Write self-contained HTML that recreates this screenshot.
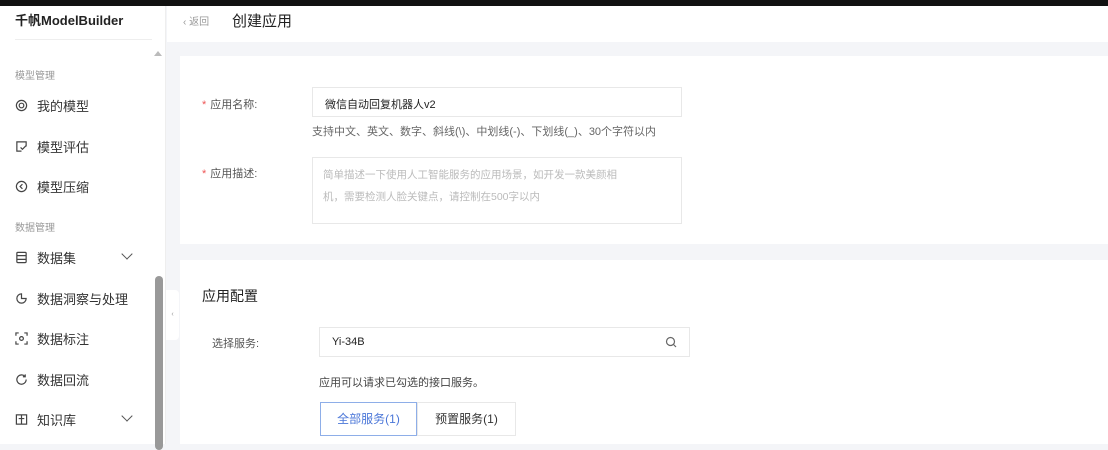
<!DOCTYPE html>
<html><head><meta charset="utf-8"><style>
*{margin:0;padding:0;box-sizing:border-box}
body{width:1108px;height:444px;overflow:hidden;background:#f4f5f8;font-family:"Liberation Sans","Noto Sans CJK SC",sans-serif;position:relative;color:#333}
.top{position:absolute;left:0;top:0;width:1108px;height:6px;background:#111}
.side{position:absolute;left:0;top:6px;width:166px;height:438px;background:#fff;border-right:1px solid #eee}
.logo{position:absolute;left:15px;top:4px;font-size:13px;font-weight:bold;color:#222}
.sep{position:absolute;left:15px;top:33px;width:137px;height:1px;background:#eee}
.grp{position:absolute;left:15px;font-size:10px;color:#999}
.item{position:absolute;left:15px;font-size:13px;color:#333;display:flex;align-items:center}
.item svg{width:13px;height:13px;margin-right:9px}
.chev{position:absolute;left:123px;width:8px;height:8px;border-right:1.3px solid #555;border-bottom:1.3px solid #555;transform:rotate(45deg)}
.sb{position:absolute;left:155px;top:270px;width:8px;height:174px;background:#999;border-radius:4px}
.sbt{position:absolute;left:154px;top:45px;width:0;height:0;border-left:4px solid transparent;border-right:4px solid transparent;border-bottom:5px solid #bbb}
.hdr{position:absolute;left:167px;top:6px;width:941px;height:36px;background:#fff}
.back{position:absolute;left:16px;top:7px;font-size:10px;color:#999}
.title{position:absolute;left:65px;top:4px;font-size:15px;color:#222}
.card{position:absolute;left:180px;width:928px;background:#fff}
.lbl{position:absolute;font-size:11px;color:#555}
.lbl b{color:#e55;font-weight:normal;margin-right:4px}
.inp{position:absolute;border:1px solid #e8e8e8;background:#fff;font-size:11px}
.tab{position:absolute;font-size:12px;height:34px;line-height:32px;text-align:center;border:1px solid #e8e8e8}
.coll{position:absolute;left:166px;top:290px;width:13px;height:50px;background:#fff;border-radius:0 4px 4px 0;font-size:7px;color:#999;line-height:50px;text-align:center}
</style></head><body>
<div class="top"></div>
<div class="side">
<div class="logo">千帆ModelBuilder</div>
<div class="sep"></div>
<div class="sbt"></div>
<div class="grp" style="top:61px">模型管理</div>
<div class="item" style="top:90px"><svg viewBox="0 0 14 14" fill="none" stroke="#444" stroke-width="1.3"><circle cx="7" cy="7" r="5.5"/><circle cx="7" cy="7" r="2.5"/></svg>我的模型</div>
<div class="item" style="top:131px"><svg viewBox="0 0 14 14" fill="none" stroke="#444" stroke-width="1.3"><path d="M12 7V2H2v10h5M6 8l2 2 4-4"/></svg>模型评估</div>
<div class="item" style="top:171px"><svg viewBox="0 0 14 14" fill="none" stroke="#444" stroke-width="1.3"><circle cx="7" cy="7" r="5.5"/><path d="M8 4.5L5.5 7 8 9.5"/></svg>模型压缩</div>
<div class="grp" style="top:213px">数据管理</div>
<div class="item" style="top:242px"><svg viewBox="0 0 14 14" fill="none" stroke="#444" stroke-width="1.3"><rect x="2" y="1.5" width="10" height="11" rx="1"/><path d="M2 5h10M2 9h10"/></svg>数据集</div><div class="chev" style="top:244px"></div>
<div class="item" style="top:283px"><svg viewBox="0 0 14 14" fill="none" stroke="#444" stroke-width="1.3"><path d="M7 2a5 5 0 1 0 5 5H7z"/></svg>数据洞察与处理</div>
<div class="item" style="top:323px"><svg viewBox="0 0 14 14" fill="none" stroke="#444" stroke-width="1.3"><path d="M1 4V1h3M10 1h3v3M13 10v3h-3M4 13H1v-3"/><circle cx="7" cy="7" r="2"/></svg>数据标注</div>
<div class="item" style="top:364px"><svg viewBox="0 0 14 14" fill="none" stroke="#444" stroke-width="1.3"><path d="M12 7a5 5 0 1 1-1.5-3.5M11 1.5v2.5H8.5"/></svg>数据回流</div>
<div class="item" style="top:404px"><svg viewBox="0 0 14 14" fill="none" stroke="#444" stroke-width="1.3"><rect x="1.5" y="2" width="11" height="10"/><path d="M7 2v10M4 6h6"/></svg>知识库</div><div class="chev" style="top:406px"></div>
<div class="sb"></div>
</div>
<div class="coll">‹</div>
<div class="hdr"><div class="back">‹ 返回</div><div class="title">创建应用</div></div>
<div class="card" style="top:56px;height:188px">
<div class="lbl" style="left:22px;top:40px"><b>*</b>应用名称:</div>
<div class="inp" style="left:132px;top:31px;width:370px;height:30px;padding:8px 12px;color:#222">微信自动回复机器人v2</div>
<div class="lbl" style="left:132px;top:67px;color:#666">支持中文、英文、数字、斜线(\)、中划线(-)、下划线(_)、30个字符以内</div>
<div class="lbl" style="left:22px;top:109px"><b>*</b>应用描述:</div>
<div class="inp" style="left:132px;top:101px;width:370px;height:67px;padding:6px 60px 8px 10px;color:#bbb;line-height:22px;font-size:10.5px">简单描述一下使用人工智能服务的应用场景，如开发一款美颜相机，需要检测人脸关键点，请控制在500字以内</div>
</div>
<div class="card" style="top:260px;height:184px">
<div style="position:absolute;left:22px;top:26px;font-size:14px;color:#222">应用配置</div>
<div class="lbl" style="left:32px;top:75px">选择服务:</div>
<div class="inp" style="left:139px;top:67px;width:371px;height:30px;padding:8px 12px;color:#222">Yi-34B<svg style="position:absolute;right:12px;top:8px" width="12" height="12" viewBox="0 0 12 12" fill="none" stroke="#666" stroke-width="1.2"><circle cx="5.5" cy="5.5" r="4"/><path d="M8.5 8.5l2.5 2.5"/></svg></div>
<div class="lbl" style="left:139px;top:114px;color:#444">应用可以请求已勾选的接口服务。</div>
<div class="tab" style="left:140px;top:142px;width:97px;color:#4a76d8;border-color:#8eaee8">全部服务(1)</div>
<div class="tab" style="left:237px;top:142px;width:99px;color:#333">预置服务(1)</div>
</div>
</body></html>
